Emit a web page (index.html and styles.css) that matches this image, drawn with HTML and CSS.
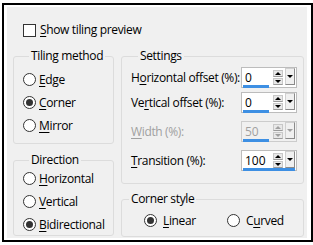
FILE: index.html
```html
<!DOCTYPE html>
<html>
<head>
<meta charset="utf-8">
<link rel="stylesheet" href="styles.css">
</head>
<body>
<div class="frame">
  <div class="dlg">
    <label class="check-row"><span class="checkbox"></span><span><u>S</u>how tiling preview</span></label>
    <div class="cols">
      <div class="col col-left">
        <fieldset class="group g-tiling">
          <legend>Tiling method</legend>
          <div class="radio-list">
            <div class="radio-row"><span class="radio"></span><span><u>E</u>dge</span></div>
            <div class="radio-row"><span class="radio on"></span><span><u>C</u>orner</span></div>
            <div class="radio-row"><span class="radio"></span><span><u>M</u>irror</span></div>
          </div>
        </fieldset>
        <fieldset class="group g-dir">
          <legend>Direction</legend>
          <div class="radio-list">
            <div class="radio-row"><span class="radio"></span><span><u>H</u>orizontal</span></div>
            <div class="radio-row"><span class="radio"></span><span><u>V</u>ertical</span></div>
            <div class="radio-row"><span class="radio on"></span><span><u>B</u>idirectional</span></div>
          </div>
        </fieldset>
      </div>
      <div class="col col-right">
        <fieldset class="group g-settings">
          <legend>Settings</legend>
          <div class="set-row r1">
            <span class="set-label">H<u>o</u>rizontal offset (%):</span>
            <div class="spin">
              <div class="spin-main"><span class="spin-val">0</span><span class="spin-arrows"><span class="arr up"></span><span class="arr dn"></span></span><span class="spin-drop"></span></div>
              <div class="spin-track"><div class="spin-bar" style="width:50%"></div></div>
            </div>
          </div>
          <div class="set-row r2">
            <span class="set-label">Ve<u>r</u>tical offset (%):</span>
            <div class="spin">
              <div class="spin-main"><span class="spin-val">0</span><span class="spin-arrows"><span class="arr up"></span><span class="arr dn"></span></span><span class="spin-drop"></span></div>
              <div class="spin-track"><div class="spin-bar" style="width:50%"></div></div>
            </div>
          </div>
          <div class="set-row r3 disabled">
            <span class="set-label"><u>W</u>idth (%):</span>
            <div class="spin">
              <div class="spin-main"><span class="spin-val">50</span><span class="spin-arrows"><span class="arr up"></span><span class="arr dn"></span></span><span class="spin-drop"></span></div>
              <div class="spin-track"><div class="spin-bar" style="width:50%"></div></div>
            </div>
          </div>
          <div class="set-row r4">
            <span class="set-label"><u>T</u>ransition (%):</span>
            <div class="spin">
              <div class="spin-main"><span class="spin-val">100</span><span class="spin-arrows"><span class="arr up"></span><span class="arr dn"></span></span><span class="spin-drop"></span></div>
              <div class="spin-track"><div class="spin-bar" style="width:100%"></div></div>
            </div>
          </div>
        </fieldset>
        <fieldset class="group g-corner">
          <legend>Corner style</legend>
          <div class="corner-row">
            <div class="radio-row linear"><span class="radio on"></span><span><u>L</u>inear</span></div>
            <div class="radio-row"><span class="radio"></span><span>C<u>u</u>rved</span></div>
          </div>
        </fieldset>
      </div>
    </div>
  </div>
</div>
</body>
</html>
```
FILE: styles.css
```css
html, body {
  margin: 0;
  padding: 0;
  background: #ffffff;
}
body {
  font-family: "Open Sans", "Noto Sans", sans-serif;
  font-size: 12px;
  letter-spacing: -0.35px;
  color: #000;
}
u {
  text-decoration: underline;
  text-underline-offset: 2px;
}
.frame {
  margin: 3px 0 0 2px;
  width: 311px;
  height: 239px;
  box-sizing: border-box;
  border: 2px solid #000;
  padding: 2px 4px 2px 3px;
  background: #fff;
}
.dlg {
  height: 100%;
  box-sizing: border-box;
  background: #f0f0f0;
  padding: 16px 0 0 6px;
}
.check-row {
  display: flex;
  align-items: center;
  gap: 4px;
  height: 14px;
  padding-left: 10px;
  line-height: 14px;
}
.checkbox {
  width: 11px;
  height: 11px;
  border: 1px solid #333;
  background: #fff;
  flex: none;
}
.cols {
  display: flex;
  gap: 7px;
  margin-top: 11px;
}
.col {
  display: flex;
  flex-direction: column;
}
.col-left { width: 101px; }
.col-right { width: 183px; }
.group {
  margin: 0;
  padding: 0;
  border: 1px solid #dcdcdc;
  border-radius: 3px;
  min-width: 0;
}
.group legend {
  padding: 0 2px;
  margin-left: 6px;
  line-height: 16px;
}
.col-right .group legend { margin-left: 7px; }
.radio-list {
  display: flex;
  flex-direction: column;
  gap: 7px;
}
.radio-list .radio-row { height: 16px; }
.g-tiling {
  padding: 7px 0 10px 9px;
}
.g-dir {
  margin-top: 8px;
  padding: 2px 0 3px 9px;
}
.radio-row {
  display: flex;
  align-items: center;
  gap: 3px;
  height: 23px;
  white-space: nowrap;
}
.radio {
  width: 11px;
  height: 11px;
  border: 1px solid #333;
  border-radius: 50%;
  background: #fff;
  flex: none;
  display: flex;
  align-items: center;
  justify-content: center;
}
.radio.on::after {
  content: "";
  width: 7px;
  height: 7px;
  border-radius: 50%;
  background: #333;
}
.g-settings {
  padding: 3px 6px 12px 9px;
}
.set-row {
  display: flex;
  align-items: center;
  justify-content: space-between;
  white-space: nowrap;
}
.set-row + .set-row { margin-top: 8px; }
.set-row.r2 { margin-top: 4px; }
.disabled { color: #a0a0a0; }
.spin {
  flex: none;
  width: 56px;
  height: 21px;
  box-sizing: border-box;
  border: 1px solid #bcbcbc;
  background: #fff;
  display: flex;
  flex-direction: column;
  letter-spacing: 0;
}
.disabled .spin {
  background: #f0f0f0;
  border-color: #cccccc;
}
.spin-main {
  flex: 1;
  display: flex;
  align-items: center;
  padding: 1px 1px 0 3px;
}
.spin-val {
  flex: 1;
  line-height: 14px;
  padding-top: 2px;
}
.spin-arrows {
  display: flex;
  flex-direction: column;
  gap: 1px;
  margin-right: 2px;
}
.arr {
  width: 10px;
  height: 7px;
  box-sizing: border-box;
  border: 1px solid #c8c8c8;
  border-bottom-color: #9a9a9a;
  background: #e8e8e8;
  display: flex;
  align-items: center;
  justify-content: center;
}
.arr::after {
  content: "";
  width: 0;
  height: 0;
  border-left: 3px solid transparent;
  border-right: 3px solid transparent;
}
.arr.up::after { border-bottom: 3px solid #000; }
.arr.dn::after { border-top: 3px solid #000; }
.disabled .arr.up::after { border-bottom-color: #a0a0a0; }
.disabled .arr.dn::after { border-top-color: #a0a0a0; }
.spin-drop {
  width: 10px;
  height: 17px;
  box-sizing: border-box;
  border: 1px solid #d0d0d0;
  border-right-color: #8a8a8a;
  border-bottom-color: #8a8a8a;
  background: #f0f0f0;
  display: flex;
  align-items: center;
  justify-content: center;
  margin-top: -1px;
}
.spin-drop::after {
  content: "";
  border-left: 3px solid transparent;
  border-right: 3px solid transparent;
  border-top: 3px solid #000;
}
.disabled .spin-drop::after { border-top-color: #a0a0a0; }
.spin-track {
  height: 3px;
  margin: 0 1px;
}
.spin-bar {
  height: 3px;
  background: #3d8fe3;
}
.g-corner {
  margin-top: 7px;
  padding: 2px 0 4px 0;
}
.corner-row {
  display: flex;
  padding-left: 22px;
}
.corner-row .radio-row { gap: 6px; }
.corner-row .linear { width: 83px; flex: none; }
```
